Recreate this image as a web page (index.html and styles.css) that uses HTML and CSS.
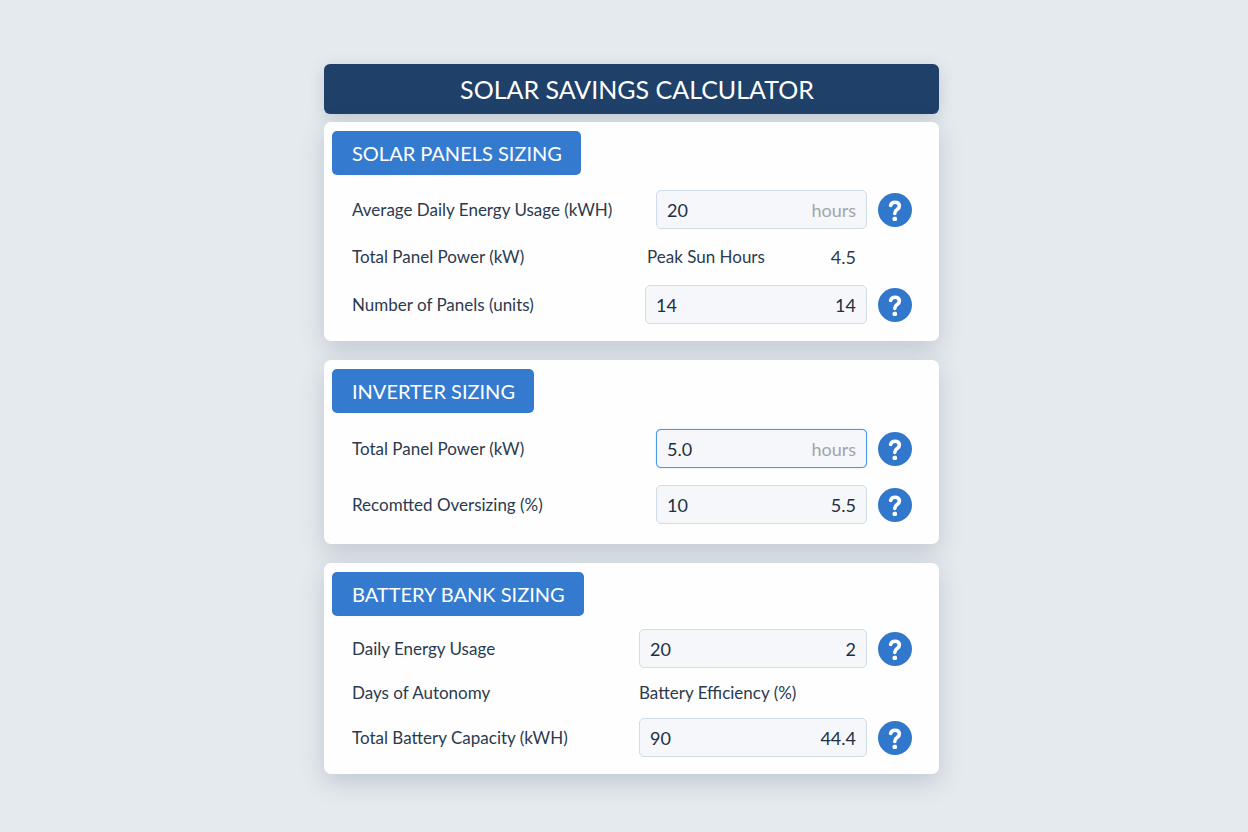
FILE: index.html
```html
<!DOCTYPE html>
<html lang="en">
<head>
    <meta charset="UTF-8">
    <meta name="viewport" content="width=device-width, initial-scale=1.0">
    <title>Solar Savings Calculator</title>
    <link rel="stylesheet" href="styles.css">
</head>
<body>
    <!-- Question mark used by all help buttons -->
    <svg class="sprite" aria-hidden="true">
        <symbol id="question" viewBox="0 0 34 34">
            <path d="M12.6 12.4 C13.2 10.4 14.8 9.2 17 9.2 C19.6 9.2 21.4 10.7 21.4 12.9 C21.4 14.7 20.4 15.6 19.1 16.5 C17.6 17.5 16.8 18.4 16.8 20.4" fill="none" stroke="#fff" stroke-width="3.6" stroke-linecap="round" stroke-linejoin="round"/>
            <rect x="14.6" y="23.8" width="4.4" height="4.2" rx="1.5" fill="#fff"/>
        </symbol>
    </svg>

    <form class="container">
        <h1>SOLAR SAVINGS CALCULATOR</h1>

        <!-- Solar Panels -->
        <section class="card">
            <h2>SOLAR PANELS SIZING</h2>
            <div class="rows">
                <div class="row">
                    <label for="dailyUsage">Average Daily Energy Usage (kWH)</label>
                    <div class="field">
                        <input type="text" id="dailyUsage" value="20">
                        <span class="unit">hours</span>
                    </div>
                    <button type="button" class="help" aria-label="Help"><svg><use href="#question"/></svg></button>
                </div>
                <div class="row text-row">
                    <label for="panelCount">Total Panel Power (kW)</label>
                    <div class="info">
                        <label for="sunHours">Peak Sun Hours</label>
                        <output id="sunHours">4.5</output>
                    </div>
                </div>
                <div class="row">
                    <label for="panelUnits">Number of Panels (units)</label>
                    <div class="field medium">
                        <input type="text" id="panelCount" value="14">
                        <output id="panelUnits">14</output>
                    </div>
                    <button type="button" class="help" aria-label="Help"><svg><use href="#question"/></svg></button>
                </div>
            </div>
        </section>

        <!-- Inverter -->
        <section class="card">
            <h2>INVERTER SIZING</h2>
            <div class="rows inverter">
                <div class="row">
                    <label for="panelPower">Total Panel Power (kW)</label>
                    <div class="field active">
                        <input type="text" id="panelPower" value="5.0">
                        <span class="unit">hours</span>
                    </div>
                    <button type="button" class="help" aria-label="Help"><svg><use href="#question"/></svg></button>
                </div>
                <div class="row">
                    <label for="oversizing">Recomtted Oversizing (%)</label>
                    <div class="field">
                        <input type="text" id="oversizing" value="10">
                        <output for="oversizing panelPower">5.5</output>
                    </div>
                    <button type="button" class="help" aria-label="Help"><svg><use href="#question"/></svg></button>
                </div>
            </div>
        </section>

        <!-- Battery Bank -->
        <section class="card">
            <h2>BATTERY BANK SIZING</h2>
            <div class="rows battery">
                <div class="row">
                    <label for="batteryUsage">Daily Energy Usage</label>
                    <div class="field wide">
                        <input type="text" id="batteryUsage" value="20">
                        <output id="autonomy">2</output>
                    </div>
                    <button type="button" class="help" aria-label="Help"><svg><use href="#question"/></svg></button>
                </div>
                <div class="row text-row">
                    <label for="autonomy">Days of Autonomy</label>
                    <div class="info wide">
                        <label for="efficiency">Battery Efficiency (%)</label>
                    </div>
                </div>
                <div class="row">
                    <label for="capacity">Total Battery Capacity (kWH)</label>
                    <div class="field wide">
                        <input type="text" id="efficiency" value="90">
                        <output id="capacity">44.4</output>
                    </div>
                    <button type="button" class="help" aria-label="Help"><svg><use href="#question"/></svg></button>
                </div>
            </div>
        </section>
    </form>
</body>
</html>
```
FILE: styles.css
```css
* {
    box-sizing: border-box;
}
body {
    margin: 0;
    padding: 64px 0 38px 15px;
    font-family: Lato, "Open Sans", sans-serif;
    font-size: 17px;
    line-height: 24px;
    color: #2b3a4e;
    background-color: #e5eaee;
}
.sprite {
    display: none;
}
.container {
    max-width: 615px;
    margin: 0 auto;
}
h1, h2 {
    margin: 0;
    color: white;
    font-weight: normal;
}
h1 {
    margin-bottom: 8px;
    padding: 9px 0 9px 11px;
    font-size: 25px;
    line-height: 32px;
    text-align: center;
    background: #1f4068;
    border-radius: 6px;
    box-shadow: 0 4px 16px rgba(60, 80, 105, 0.2);
}
h2 {
    width: fit-content;
    padding: 8px 19px 8px 20px;
    font-size: 20px;
    line-height: 28px;
    background: #347bd0;
    border-radius: 5px;
}
.card {
    margin-bottom: 19px;
    padding: 9px 8px 17px;
    background: #fefefe;
    border-radius: 7px;
    box-shadow: 0 8px 24px rgba(60, 80, 105, 0.22);
}
.rows {
    display: flex;
    flex-direction: column;
    gap: 16px;
    padding: 15px 19px 0 20px;
}
.inverter {
    gap: 17px;
    padding-top: 16px;
    padding-bottom: 3px;
}
.battery {
    gap: 13px;
    padding-top: 13px;
}
.row {
    display: flex;
    align-items: center;
    gap: 11px;
}
.row > label {
    flex: 1;
}
.text-row {
    padding-right: 45px;
}
.field {
    display: flex;
    align-items: center;
    justify-content: space-between;
    width: 211px;
    height: 39px;
    padding: 0 10px;
    font-size: 18px;
    color: #222f42;
    background: #f5f7fa;
    border: 1px solid #d0dce8;
    border-radius: 5px;
}
.field input {
    width: 80px;
    padding: 0;
    font: inherit;
    color: inherit;
    background: none;
    border: none;
    outline: none;
}
.active, .field:focus-within {
    border-color: #4e97e6;
    box-shadow: 0 0 1px #4e97e6;
}
.info {
    display: flex;
    justify-content: space-between;
    width: 220px;
    padding-right: 11px;
}
.info output {
    font-size: 18px;
}
.medium {
    width: 222px;
}
.wide {
    width: 228px;
}
.unit {
    color: #a0a5ad;
}
.help {
    width: 34px;
    height: 34px;
    padding: 0;
    background: #3178cd;
    border: none;
    border-radius: 50%;
    cursor: pointer;
}
.help:hover {
    background: #2868b5;
}
.help svg {
    display: block;
    width: 34px;
    height: 34px;
}
```
